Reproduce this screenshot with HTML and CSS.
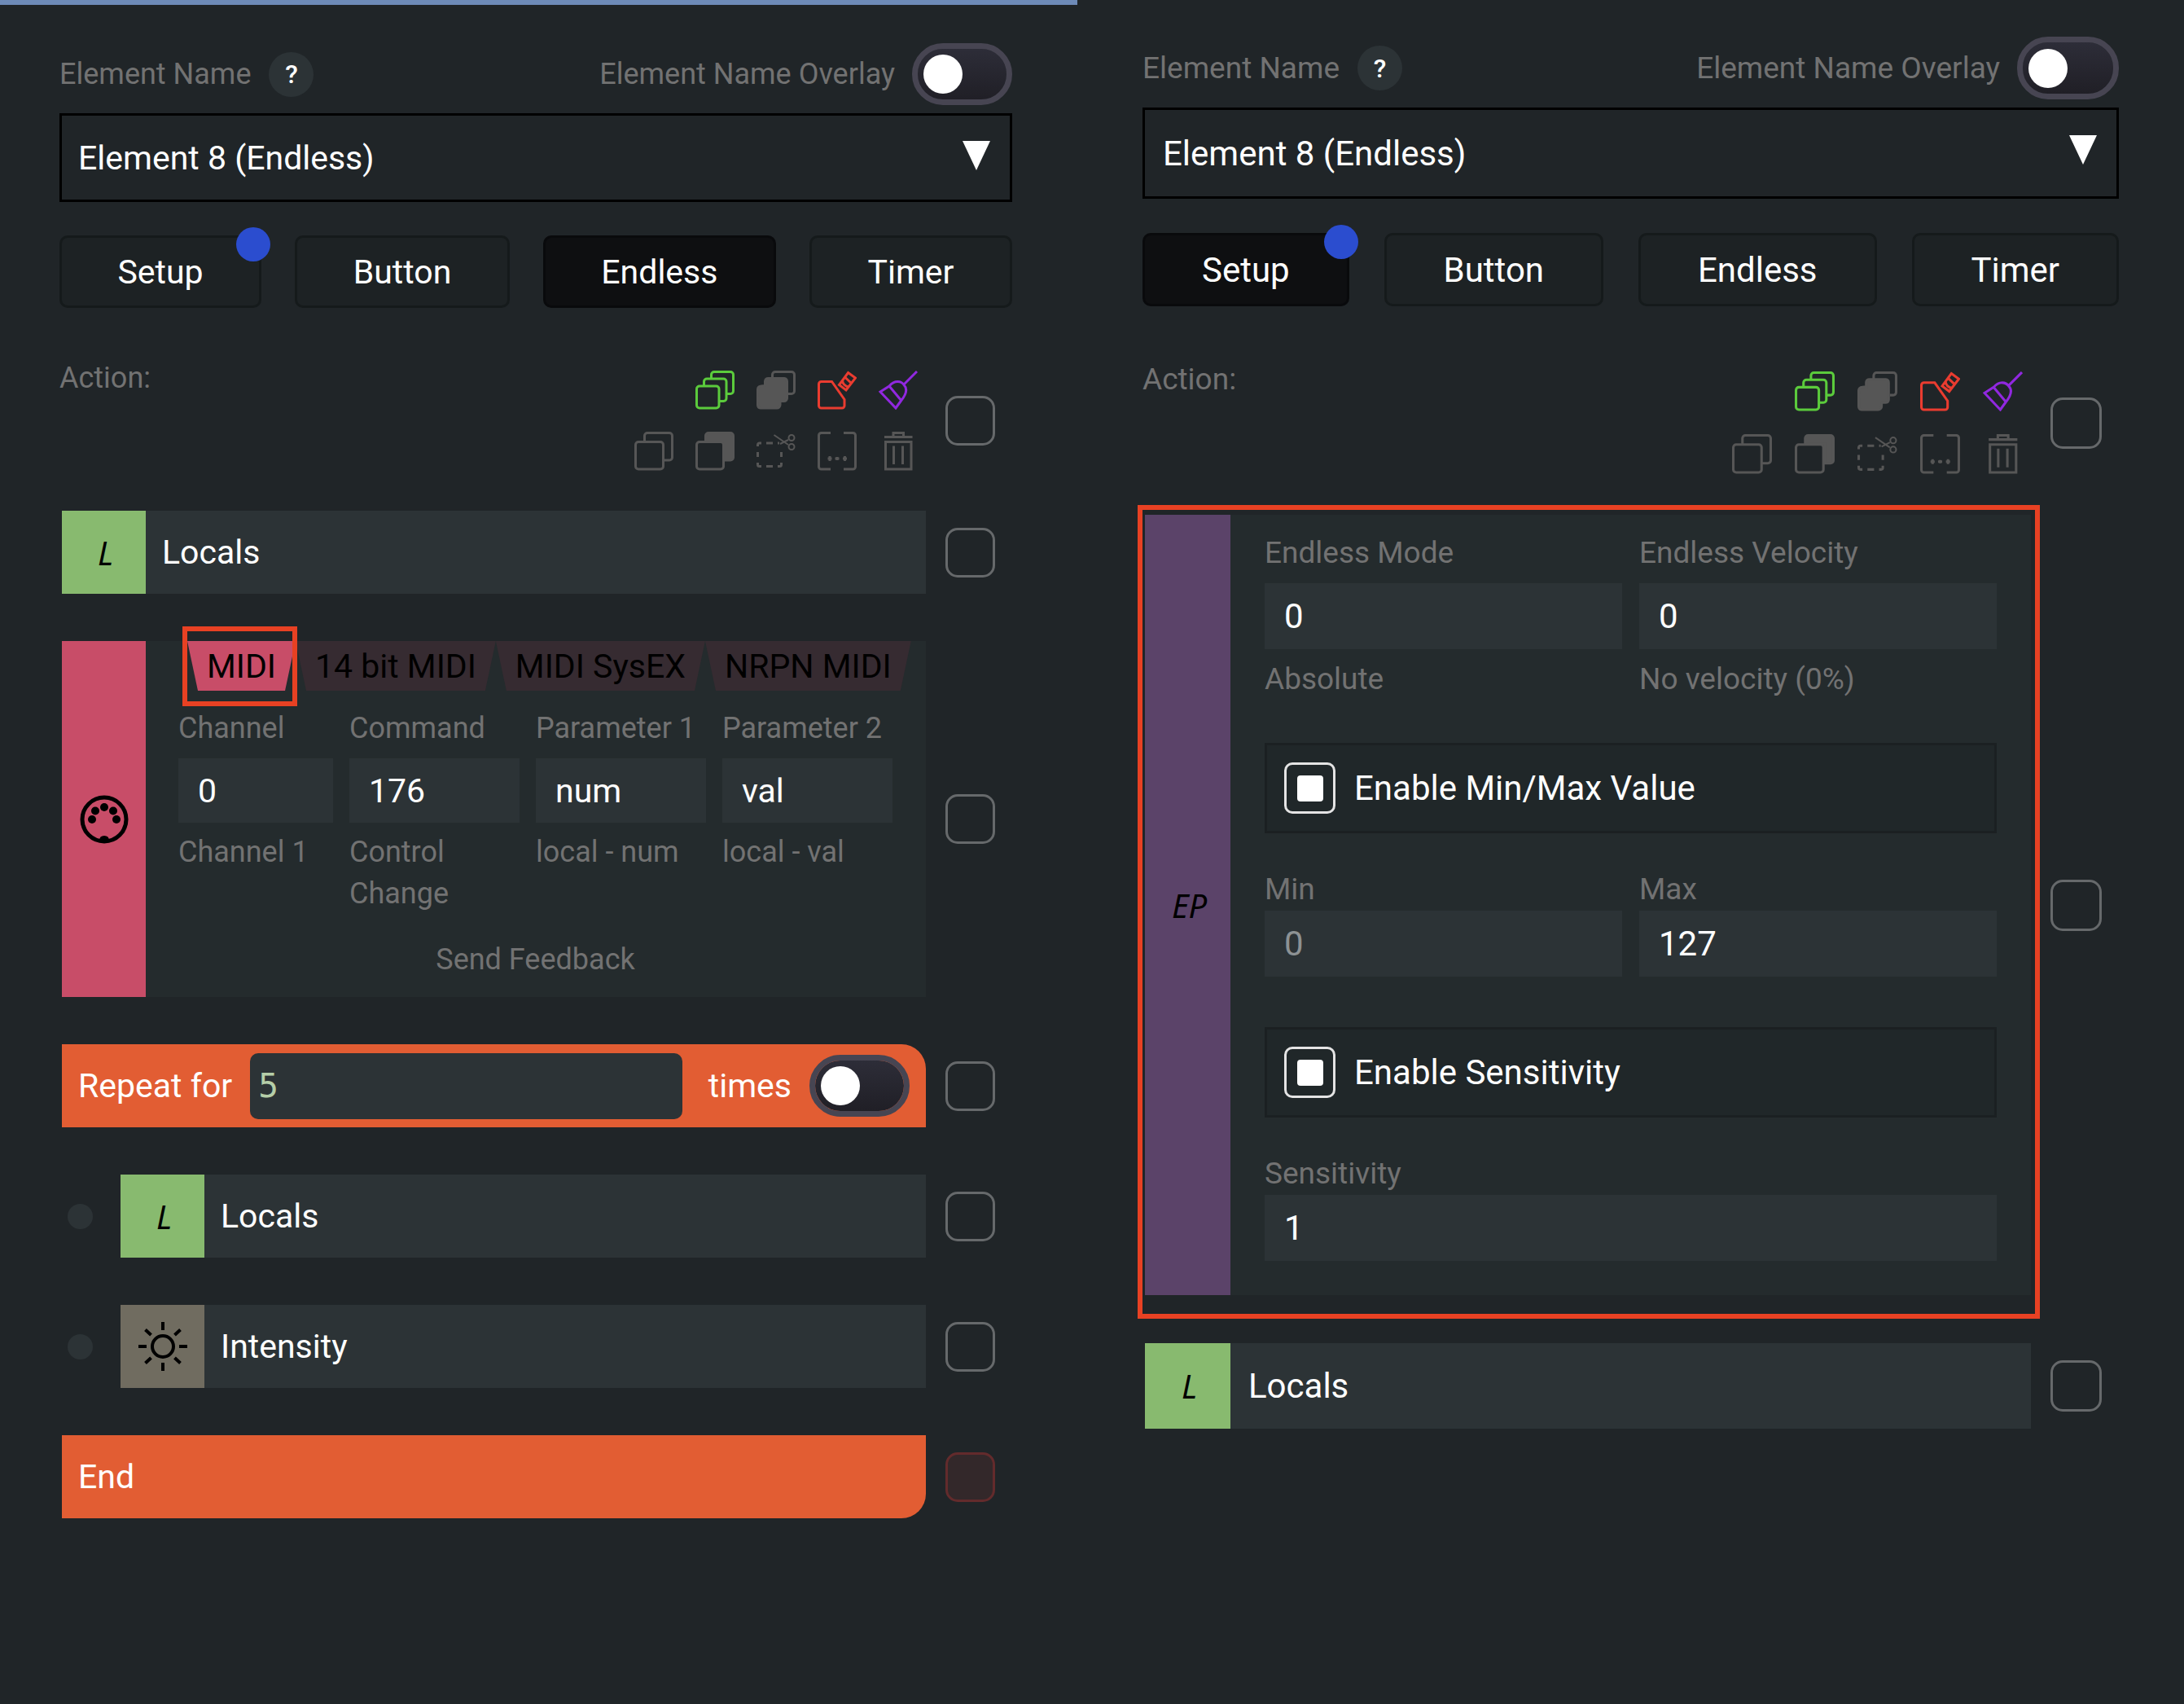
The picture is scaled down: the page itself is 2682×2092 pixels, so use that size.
FILE: index.html
```html
<!DOCTYPE html>
<html lang="en">
<head>
<meta charset="utf-8">
<title>Element configuration</title>
<link rel="stylesheet" href="styles.css">
</head>
<body>
<svg class="sprite" aria-hidden="true">
  <symbol id="i-copy-all" viewBox="0 0 48 48">
    <rect x="1.5" y="19" width="27.5" height="27" rx="3.5"/>
    <path d="M10.5 18.5V13.500a3.500 3.500 0 0 1 3.500-3.500H34.500a3.500 3.500 0 0 1 3.500 3.500V34a3.500 3.500 0 0 1-3.500 3.500H30"/>
    <path d="M19.500 9.500V5a3.500 3.500 0 0 1 3.500-3.500H43a3.500 3.500 0 0 1 3.500 3.500V25a3.500 3.500 0 0 1-3.500 3.500H39"/>
  </symbol>
  <symbol id="i-paste-all" viewBox="0 0 48 48">
    <path fill="currentColor" d="M10.500 18.500V13a4 4 0 0 1 4-3.500H34a4 4 0 0 1 3.500 4V34a4 4 0 0 1-4 3.500H29V42a4 4 0 0 1-4 4H5a4 4 0 0 1-3.500-4V23a4 4 0 0 1 4-4z"/>
    <path d="M19.500 9.500V5a3.500 3.500 0 0 1 3.500-3.500H43a3.500 3.500 0 0 1 3.500 3.500V25a3.500 3.500 0 0 1-3.500 3.500H39"/>
  </symbol>
  <symbol id="i-overwrite" viewBox="0 0 48 48">
    <path d="M4.500 13.500H17.500L33 35.500V43a3 3 0 0 1-3 3H4.500a3 3 0 0 1-3-3V16.500a3 3 0 0 1 3-3z"/>
    <path d="M37.500 2.500L46.500 9L35 24L26.500 17.500zM33.500 8L41.500 15.500M30.500 12.500q1 6 7.500 7.500"/>
  </symbol>
  <symbol id="i-broom" viewBox="0 0 48 48">
    <path d="M47 1L30.500 17.500M2 26L13 19C20 11 28 13 31 17.500C35.500 22 34 29 27.500 37L21 46zM13 19L28 37"/>
  </symbol>
  <symbol id="i-copy" viewBox="0 0 48 48">
    <rect x="1.500" y="12.500" width="34" height="33.500" rx="3.500"/>
    <path d="M12.500 12V5a3.500 3.500 0 0 1 3.500-3.500H43a3.500 3.500 0 0 1 3.500 3.500V31.500a3.500 3.500 0 0 1-3.500 3.500H36"/>
  </symbol>
  <symbol id="i-paste" viewBox="0 0 48 48">
    <rect x="1.500" y="12.500" width="33" height="33.500" rx="3.500"/>
    <path fill="currentColor" d="M12.500 11.500V5a3.500 3.500 0 0 1 3.500-3.500H43a3.500 3.500 0 0 1 3.500 3.500V31.500a3.500 3.500 0 0 1-3.500 3.500H36V11.500z"/>
  </symbol>
  <symbol id="i-cut" viewBox="0 0 48 48">
    <path d="M1.500 18V16a2 2 0 0 1 2-2H6M12 14H20M26 14H28M1.500 25V31M1.500 38V40.500a2 2 0 0 0 2 2H6M12 42.500H20M26 42.500H28.500a2 2 0 0 0 2-2V38M30.500 25V31"/>
    <path stroke-width="2" d="M21.500 4L39 16M29 15L39 10"/>
    <circle stroke-width="2" cx="43" cy="7.500" r="3.500"/><circle stroke-width="2" cx="43" cy="18.500" r="3.500"/>
  </symbol>
  <symbol id="i-bracket" viewBox="0 0 48 48">
    <path d="M16 1.500H4.500a3 3 0 0 0-3 3V43a3 3 0 0 0 3 3H16M32 1.500H43.500a3 3 0 0 1 3 3V43a3 3 0 0 1-3 3H32"/>
    <path d="M15 30V36M12.500 33H17.500M24 31V35M21.500 33H26.500M33.500 30V36M31 33H36"/>
  </symbol>
  <symbol id="i-trash" viewBox="0 0 48 48">
    <path d="M7 6.500H41.500M18 6V1.500H30.500V6M8.500 12.500H40V46H8.500zM18.500 17.500V40M29.500 17.500V40"/>
  </symbol>
</svg>

<main class="workspace">
  <section class="panel panel-endless">
    <header class="name-bar">
      <label class="caption" for="element-a">Element Name</label>
      <button class="help" type="button">?</button>
      <label class="caption overlay-label" for="overlay-a">Element Name Overlay</label>
      <input class="switch" type="checkbox" id="overlay-a">
    </header>
    <div class="picker">
      <select id="element-a"><option>Element 8 (Endless)</option></select>
      <svg class="picker-arrow" viewBox="0 0 34 36" aria-hidden="true"><path d="M0 0H34L17 36z"/></svg>
    </div>
    <nav class="events">
      <button class="event has-change" type="button">Setup</button>
      <button class="event" type="button">Button</button>
      <button class="event active" type="button">Endless</button>
      <button class="event" type="button">Timer</button>
    </nav>
    <div class="toolbar">
      <span class="caption">Action:</span>
      <div class="tools">
        <button class="tool tool-first green" type="button" aria-label="Copy all"><svg><use href="#i-copy-all"/></svg></button>
        <button class="tool" type="button" aria-label="Paste all"><svg><use href="#i-paste-all"/></svg></button>
        <button class="tool red" type="button" aria-label="Overwrite"><svg><use href="#i-overwrite"/></svg></button>
        <button class="tool purple" type="button" aria-label="Clear"><svg><use href="#i-broom"/></svg></button>
        <button class="tool" type="button" aria-label="Copy"><svg><use href="#i-copy"/></svg></button>
        <button class="tool" type="button" aria-label="Paste"><svg><use href="#i-paste"/></svg></button>
        <button class="tool" type="button" aria-label="Cut"><svg><use href="#i-cut"/></svg></button>
        <button class="tool" type="button" aria-label="Merge"><svg><use href="#i-bracket"/></svg></button>
        <button class="tool" type="button" aria-label="Remove"><svg><use href="#i-trash"/></svg></button>
      </div>
      <input class="check" type="checkbox" aria-label="Select all">
    </div>

    <ul class="actions">
      <li class="action">
        <div class="block">
          <span class="badge local">L</span>
          <span class="title">Locals</span>
        </div>
        <input class="check" type="checkbox" aria-label="Select Locals">
      </li>
      <li class="action">
        <div class="block open">
          <span class="badge midi">
            <svg class="badge-icon" viewBox="0 0 60 60" aria-hidden="true">
              <circle cx="30" cy="30" r="27" fill="none" stroke="#000" stroke-width="5"/>
              <circle cx="15" cy="30" r="5"/><circle cx="19" cy="19.500" r="5"/><circle cx="30" cy="15" r="5"/><circle cx="41" cy="19.500" r="5"/><circle cx="45" cy="30" r="5"/>
              <path d="M24 56q0-6 6-6t6 6z"/>
            </svg>
          </span>
          <div class="form midi-form">
            <div class="types">
              <span class="marked"><button class="type active" type="button">MIDI</button></span>
              <button class="type" type="button">14 bit MIDI</button>
              <button class="type" type="button">MIDI SysEX</button>
              <button class="type" type="button">NRPN MIDI</button>
            </div>
            <div class="fields four">
              <div class="field"><label class="caption" for="ch">Channel</label><input class="text" id="ch" value="0"><span class="caption">Channel 1</span></div>
              <div class="field"><label class="caption" for="cmd">Command</label><input class="text" id="cmd" value="176"><span class="caption">Control Change</span></div>
              <div class="field"><label class="caption" for="p1">Parameter 1</label><input class="text" id="p1" value="num"><span class="caption">local - num</span></div>
              <div class="field"><label class="caption" for="p2">Parameter 2</label><input class="text" id="p2" value="val"><span class="caption">local - val</span></div>
            </div>
            <button class="caption feedback" type="button">Send Feedback</button>
          </div>
        </div>
        <input class="check" type="checkbox" aria-label="Select MIDI">
      </li>
      <li class="action">
        <div class="block loop loop-start">
          <label for="times">Repeat for</label>
          <input class="code" id="times" value="5">
          <label for="loop-switch">times</label>
          <input class="switch" type="checkbox" id="loop-switch">
        </div>
        <input class="check" type="checkbox" aria-label="Select repeat">
      </li>
      <li class="action nested">
        <div class="block">
          <span class="badge local">L</span>
          <span class="title">Locals</span>
        </div>
        <input class="check" type="checkbox" aria-label="Select nested Locals">
      </li>
      <li class="action nested">
        <div class="block">
          <span class="badge intensity">
            <svg class="badge-icon" viewBox="0 0 60 60" fill="none" stroke="#000" stroke-width="4" aria-hidden="true">
              <circle cx="30" cy="30" r="13"/>
              <path d="M30 0V10M30 50V60M0 30H10M50 30H60M8.500 9.500L15.500 16M51.500 9.500L44.500 16M8.500 50.500L15.500 44M51.500 50.500L44.500 44"/>
            </svg>
          </span>
          <span class="title">Intensity</span>
        </div>
        <input class="check" type="checkbox" aria-label="Select Intensity">
      </li>
      <li class="action">
        <div class="block loop loop-end"><span>End</span></div>
        <input class="check" type="checkbox" aria-label="Select end" disabled>
      </li>
    </ul>
  </section>

  <section class="panel panel-setup">
    <header class="name-bar">
      <label class="caption" for="element-b">Element Name</label>
      <button class="help" type="button">?</button>
      <label class="caption overlay-label" for="overlay-b">Element Name Overlay</label>
      <input class="switch" type="checkbox" id="overlay-b">
    </header>
    <div class="picker">
      <select id="element-b"><option>Element 8 (Endless)</option></select>
      <svg class="picker-arrow" viewBox="0 0 34 36" aria-hidden="true"><path d="M0 0H34L17 36z"/></svg>
    </div>
    <nav class="events">
      <button class="event has-change active" type="button">Setup</button>
      <button class="event" type="button">Button</button>
      <button class="event" type="button">Endless</button>
      <button class="event" type="button">Timer</button>
    </nav>
    <div class="toolbar">
      <span class="caption">Action:</span>
      <div class="tools">
        <button class="tool tool-first green" type="button" aria-label="Copy all"><svg><use href="#i-copy-all"/></svg></button>
        <button class="tool" type="button" aria-label="Paste all"><svg><use href="#i-paste-all"/></svg></button>
        <button class="tool red" type="button" aria-label="Overwrite"><svg><use href="#i-overwrite"/></svg></button>
        <button class="tool purple" type="button" aria-label="Clear"><svg><use href="#i-broom"/></svg></button>
        <button class="tool" type="button" aria-label="Copy"><svg><use href="#i-copy"/></svg></button>
        <button class="tool" type="button" aria-label="Paste"><svg><use href="#i-paste"/></svg></button>
        <button class="tool" type="button" aria-label="Cut"><svg><use href="#i-cut"/></svg></button>
        <button class="tool" type="button" aria-label="Merge"><svg><use href="#i-bracket"/></svg></button>
        <button class="tool" type="button" aria-label="Remove"><svg><use href="#i-trash"/></svg></button>
      </div>
      <input class="check" type="checkbox" aria-label="Select all">
    </div>

    <ul class="actions">
      <li class="action">
        <div class="block open outlined">
          <span class="badge endless">EP</span>
          <div class="form endless-form">
            <div class="fields two">
              <div class="field"><label class="caption" for="mode">Endless Mode</label><input class="text" id="mode" value="0"><span class="caption">Absolute</span></div>
              <div class="field"><label class="caption" for="vel">Endless Velocity</label><input class="text" id="vel" value="0"><span class="caption">No velocity (0%)</span></div>
            </div>
            <label class="option"><input class="tick" type="checkbox" checked>Enable Min/Max Value</label>
            <div class="fields two tight">
              <div class="field"><label class="caption" for="min">Min</label><input class="text" id="min" placeholder="0"></div>
              <div class="field"><label class="caption" for="max">Max</label><input class="text" id="max" value="127"></div>
            </div>
            <label class="option"><input class="tick" type="checkbox" checked>Enable Sensitivity</label>
            <div class="fields tight">
              <div class="field"><label class="caption" for="sens">Sensitivity</label><input class="text" id="sens" value="1"></div>
            </div>
          </div>
        </div>
        <input class="check" type="checkbox" aria-label="Select endless setup">
      </li>
      <li class="action">
        <div class="block">
          <span class="badge local">L</span>
          <span class="title">Locals</span>
        </div>
        <input class="check" type="checkbox" aria-label="Select Locals">
      </li>
    </ul>
  </section>
</main>
</body>
</html>
```
FILE: styles.css
```css
* {
  box-sizing: border-box;
}

body {
  margin: 0;
  background: #202528;
  color: #fff;
  font-family: Roboto, "Liberation Sans", sans-serif;
}

button,
input,
select {
  margin: 0;
  font: inherit;
  color: inherit;
}

button {
  padding: 0;
  border: 0;
  background: none;
}

.sprite {
  display: none;
}

.workspace {
  display: grid;
  grid-template-columns: 1323fr 1359fr;
  min-height: 100vh;
}

.panel {
  min-width: 0;
  font-size: var(--text);
}

.panel-endless {
  --text: 41px;
  --small: 36px;
  --line: 51px;
  --pad: 20px;
  --row: 102px;
  --gap: 58px;
  --badge: 103px;
  --check: 61px;
  --icon: 48px;
  --icon-gap: 27px;
  --switch-w: 123px;
  --switch-h: 76px;
  --picker: 109px;
  --event: 89px;
  --event-gap: 41px;
  --event-top: 41px;
  --tool-gap: 61px;
  --list-gap: 49px;
  --input: 79px;
  padding: 47px 80px 80px 73px;
  border-top: 6px solid #6e8bb8;
}

.panel-setup {
  --text: 42px;
  --small: 37px;
  --line: 52px;
  --pad: 22px;
  --row: 105px;
  --gap: 59px;
  --badge: 105px;
  --check: 63px;
  --icon: 49px;
  --icon-gap: 28px;
  --switch-w: 125px;
  --switch-h: 77px;
  --picker: 112px;
  --event: 90px;
  --event-gap: 43px;
  --event-top: 42px;
  --tool-gap: 64px;
  --list-gap: 50px;
  --input: 81px;
  padding: 45px 80px 80px;
}

.caption {
  color: #727272;
  font-size: var(--small);
  line-height: var(--line);
}

.name-bar {
  display: flex;
  align-items: center;
  height: var(--switch-h);
  margin-bottom: 10px;
}

.help {
  width: 55px;
  height: 55px;
  margin-left: 22px;
  border-radius: 50%;
  background: #2c3336;
  font-size: 32px;
  font-weight: 500;
}

.overlay-label {
  margin-left: auto;
  margin-right: 21px;
}

.switch {
  flex: none;
  appearance: none;
  display: flex;
  align-items: center;
  width: var(--switch-w);
  height: var(--switch-h);
  padding-left: 7px;
  border: 7px solid #474552;
  border-radius: 38px;
  background: linear-gradient(#2d2d38, #201f26) padding-box;
}

.switch::before {
  content: "";
  width: 48px;
  height: 48px;
  border-radius: 50%;
  background: #fff;
}

.picker {
  position: relative;
}

.picker select {
  display: block;
  appearance: none;
  width: 100%;
  height: var(--picker);
  padding: 0 80px 0 var(--pad);
  border: 3px solid #000;
  border-radius: 0;
  background: #202528;
}

.picker-arrow {
  position: absolute;
  top: 34px;
  right: 27px;
  width: 34px;
  height: 36px;
  fill: #fff;
  pointer-events: none;
}

.events {
  display: flex;
  gap: var(--event-gap);
  margin-top: var(--event-top);
}

.event {
  position: relative;
  flex: 1 1 auto;
  height: var(--event);
  border: 3px solid #151a1b;
  border-radius: 10px;
  background: #1d2224;
}

.event.active {
  border-color: #090a0c;
  background: #0e0f11;
}

.has-change::after {
  content: "";
  position: absolute;
  top: -13px;
  right: -14px;
  width: 42px;
  height: 42px;
  border-radius: 50%;
  background: #2b4dcf;
}

.toolbar {
  display: flex;
  align-items: flex-start;
  margin-top: var(--tool-gap);
  margin-bottom: var(--list-gap);
  padding-right: 21px;
}

.tools {
  display: grid;
  grid-template-columns: repeat(5, var(--icon));
  gap: var(--icon-gap);
  margin: 16px 34px 0 auto;
}

.toolbar .check {
  align-self: center;
  margin-top: 16px;
}

.tool {
  height: var(--icon);
  color: #565656;
}

.tool svg {
  display: block;
  width: 100%;
  height: 100%;
  fill: none;
  stroke: currentColor;
  stroke-width: 3;
}

.tool-first {
  grid-column-start: 2;
}

.green {
  color: #5bcb3c;
}

.red {
  color: #ea3c30;
}

.purple {
  color: #9128e0;
}

.check {
  flex: none;
  appearance: none;
  width: var(--check);
  height: var(--check);
  border: 3px solid #66696b;
  border-radius: 15px;
}

.check:disabled {
  border-color: #632b2c;
  background: #33282a;
}

.actions {
  display: flex;
  flex-direction: column;
  gap: var(--gap);
  margin: 0;
  padding: 0 21px 0 3px;
  list-style: none;
}

.action {
  display: flex;
  align-items: center;
  gap: 24px;
}

.block {
  flex: 1;
  display: flex;
  align-items: center;
  min-width: 0;
  min-height: var(--row);
  background: #2c3336;
}

.badge {
  flex: none;
  align-self: stretch;
  display: flex;
  align-items: center;
  justify-content: center;
  width: var(--badge);
  color: #000;
  font: italic 400 40px "Noto Sans", "Open Sans", sans-serif;
}

.local {
  padding-left: 4px;
  background: #88ba6f;
}

.midi {
  background: #c84d68;
}

.intensity {
  background: #706c60;
}

.endless {
  padding-left: 4px;
  background: #5b4369;
}

.badge-icon {
  width: 60px;
  height: 60px;
}

.title {
  padding-left: var(--pad);
}

.nested::before {
  content: "";
  width: 31px;
  height: 31px;
  margin: 0 10px 0 7px;
  border-radius: 50%;
  background: #2c3336;
}

.open {
  background: #242b2d;
}

.form {
  flex: 1;
  display: flex;
  flex-direction: column;
  min-width: 0;
}

.midi-form {
  align-self: flex-start;
  padding: 0 41px 20px 40px;
}

.types {
  display: flex;
  margin: 0 0 21px 11px;
}

.type {
  height: 61px;
  padding: 0 24px;
  background: #362b31;
  clip-path: polygon(0 0, 100% 0, calc(100% - 13px) 100%, 13px 100%);
  color: #000;
  white-space: nowrap;
}

.type.active {
  background: #c84d68;
}

.marked {
  position: relative;
}

.marked::after,
.outlined::after {
  content: "";
  position: absolute;
  border: 6px solid #e84123;
  pointer-events: none;
}

.marked::after {
  z-index: 1;
  inset: -18px -2px -19px -6px;
}

.outlined {
  position: relative;
}

.outlined::after {
  inset: -12px -11px -29px -9px;
}

.fields {
  display: grid;
  column-gap: 21px;
}

.four {
  grid-template-columns: 190fr 209fr 209fr 209fr;
  column-gap: 20px;
}

.two {
  grid-template-columns: 1fr 1fr;
}

.field {
  display: flex;
  flex-direction: column;
  gap: 11px;
  min-width: 0;
}

.tight .field {
  gap: 0;
}

.text {
  width: 100%;
  height: var(--input);
  padding: 0 24px;
  border: 0;
  background: #2c3336;
}

.text::placeholder {
  color: #8d9294;
  opacity: 1;
}

.feedback {
  align-self: center;
  margin-top: 30px;
}

.endless-form {
  padding: 21px 42px 42px;
}

.option {
  display: flex;
  align-items: center;
  gap: 23px;
  height: 111px;
  margin: 62px 0 43px;
  padding: 0 21px;
  border: 3px solid #1b2022;
  background: #202729;
}

.fields:first-child + .option {
  margin-top: 52px;
}

.tick {
  appearance: none;
  display: grid;
  place-items: center;
  width: var(--check);
  height: var(--check);
  border: 3px solid #e4e4e4;
  border-radius: 10px;
}

.tick:checked::before {
  content: "";
  width: 32px;
  height: 32px;
  border-radius: 4px;
  background: #fff;
}

.loop {
  padding: 0 20px;
  background: #e25d33;
}

.loop-start {
  border-top-right-radius: 30px;
}

.loop-end {
  border-bottom-right-radius: 30px;
}

.code {
  flex: 1;
  min-width: 0;
  height: 81px;
  margin: 0 32px 0 22px;
  padding: 0 10px;
  border: 0;
  border-radius: 10px;
  background: #2c3336;
  color: #b5cea8;
  font-family: "DejaVu Sans Mono", monospace;
}

.loop .switch {
  margin-left: 22px;
}
```
